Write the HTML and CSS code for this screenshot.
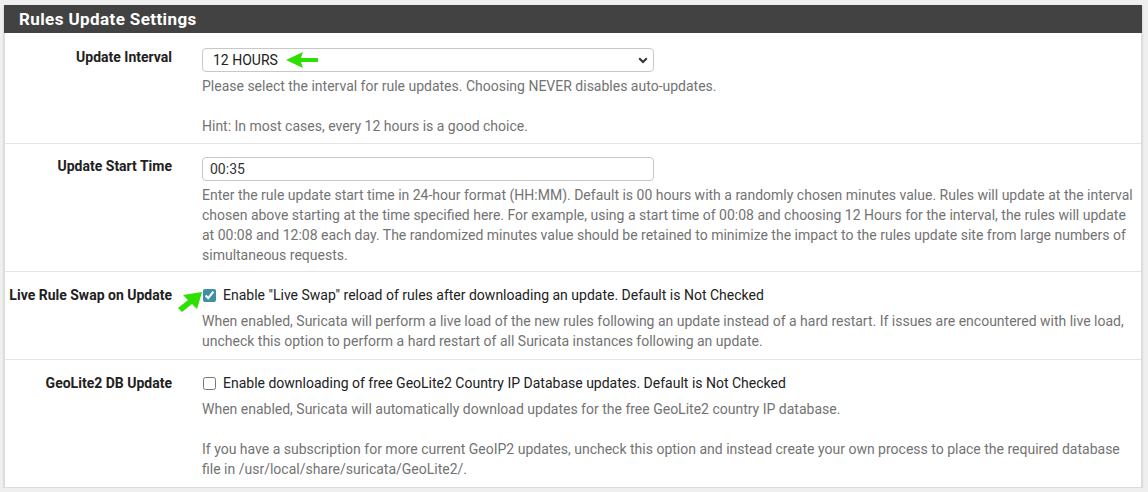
FILE: index.html
```html
<!DOCTYPE html>
<html>
<head>
<meta charset="utf-8">
<link rel="stylesheet" href="styles.css">
</head>
<body>
<div class="panel">
  <div class="panel-heading"><h2 class="panel-title">Rules Update Settings</h2></div>
  <div class="panel-body">
    <div class="form-row first">
      <label class="row-label">Update Interval</label>
      <div class="row-control">
        <div class="select-wrap">
          <select class="form-select"><option>12 HOURS</option></select>
          <svg class="chev" width="10" height="7" viewBox="0 0 10 7"><path d="M1.2 1.2 L5 5 L8.8 1.2" fill="none" stroke="#333" stroke-width="2"/></svg>
          <svg class="arrow arrow-left" width="36" height="18" viewBox="0 0 36 18"><polygon points="1,9 18,1 16,7 33,7 33,11 16,11 18,17" fill="#2ee000"/></svg>
        </div>
        <div class="help">Please select the interval for rule updates. Choosing NEVER disables auto-updates.<br><br>Hint: In most cases, every 12 hours is a good choice.</div>
      </div>
    </div>
    <div class="form-row">
      <label class="row-label">Update Start Time</label>
      <div class="row-control">
        <input class="form-input" type="text" value="00:35">
        <div class="help">Enter the rule update start time in 24-hour format (HH:MM). Default is 00 hours with a randomly chosen minutes value. Rules will update at the interval chosen above starting at the time specified here. For example, using a start time of 00:08 and choosing 12 Hours for the interval, the rules will update at 00:08 and 12:08 each day. The randomized minutes value should be retained to minimize the impact to the rules update site from large numbers of simultaneous requests.</div>
      </div>
    </div>
    <div class="form-row check-row">
      <label class="row-label">Live Rule Swap on Update</label>
      <div class="row-control">
        <div class="check-line">
          <input class="check" type="checkbox" checked>
          <span>Enable "Live Swap" reload of rules after downloading an update. Default is Not Checked</span>
          <svg class="arrow arrow-diag" width="26" height="22" viewBox="0 0 26 22"><polygon points="25,1 6,4 11,9 1,17 5,21 15,13 20,18" fill="#2ee000"/></svg>
        </div>
        <div class="help">When enabled, Suricata will perform a live load of the new rules following an update instead of a hard restart. If issues are encountered with live load, uncheck this option to perform a hard restart of all Suricata instances following an update.</div>
      </div>
    </div>
    <div class="form-row check-row">
      <label class="row-label">GeoLite2 DB Update</label>
      <div class="row-control">
        <div class="check-line">
          <input class="check" type="checkbox">
          <span>Enable downloading of free GeoLite2 Country IP Database updates. Default is Not Checked</span>
        </div>
        <div class="help">When enabled, Suricata will automatically download updates for the free GeoLite2 country IP database.<br><br>If you have a subscription for more current GeoIP2 updates, uncheck this option and instead create your own process to place the required database file in /usr/local/share/suricata/GeoLite2/.</div>
      </div>
    </div>
  </div>
</div>
</body>
</html>
```

FILE: styles.css
```css
html, body {
  margin: 0;
  padding: 0;
  background: #efefef;
}
body {
  padding: 5px 6px 0 4px;
  font-family: Roboto, "Liberation Sans", sans-serif;
  font-size: 14px;
  line-height: 20px;
  color: #212121;
}
.panel {
  width: 1138px;
  background: #fff;
  box-shadow: 0 1px 2px rgba(0,0,0,0.22);
}
.panel-heading {
  background: #424242;
  height: 28px;
  padding: 0 15px;
  display: flex;
  align-items: center;
}
.panel-title {
  margin: 0;
  color: #fff;
  font-size: 17px;
  font-weight: 700;
  letter-spacing: 0.4px;
  line-height: 20px;
}
.panel-body {
  border-left: 1px solid #dcdcdc;
  border-right: 1px solid #dcdcdc;
  border-bottom: 1px solid #dcdcdc;
}
.form-row {
  display: grid;
  grid-template-columns: 167px 1fr;
  column-gap: 30px;
  padding: 13px 5px 6px 0;
  border-top: 1px solid #e4e4e4;
}
.form-row.first {
  border-top: none;
  padding-top: 15px;
  padding-bottom: 7px;
}
.form-row.check-row {
  padding-bottom: 8px;
}
.row-label {
  text-align: right;
  font-weight: 700;
  color: #212121;
  margin-top: -1px;
}
.check-row .row-label {
  margin-top: 0;
}
.row-control {
  min-width: 0;
}
.select-wrap {
  position: relative;
  width: 452px;
}
.form-select {
  appearance: none;
  -webkit-appearance: none;
  display: block;
  width: 452px;
  height: 24px;
  padding: 0 10px;
  border: 1px solid #c8c8c8;
  border-radius: 4px;
  background: #fff;
  font-family: Roboto, "Liberation Sans", sans-serif;
  font-size: 14px;
  color: #212121;
}
.chev {
  position: absolute;
  right: 6px;
  top: 9px;
}
.arrow {
  position: absolute;
}
.arrow-left {
  left: 83px;
  top: 3px;
}
.form-input {
  display: block;
  box-sizing: border-box;
  width: 452px;
  height: 24px;
  padding: 0 7px;
  border: 1px solid #c8c8c8;
  border-radius: 4px;
  font-family: Roboto, "Liberation Sans", sans-serif;
  font-size: 14px;
  color: #333;
}
.help {
  margin-top: 4px;
  color: #737373;
}
.check-line + .help {
  margin-top: 6px;
}
.check-line {
  position: relative;
  display: flex;
  align-items: center;
  gap: 7px;
}
.check {
  margin: 0 0 0 1px;
  width: 13px;
  height: 13px;
  accent-color: #3f8fa6;
}
.arrow-diag {
  left: -25px;
  top: 6px;
}
```
